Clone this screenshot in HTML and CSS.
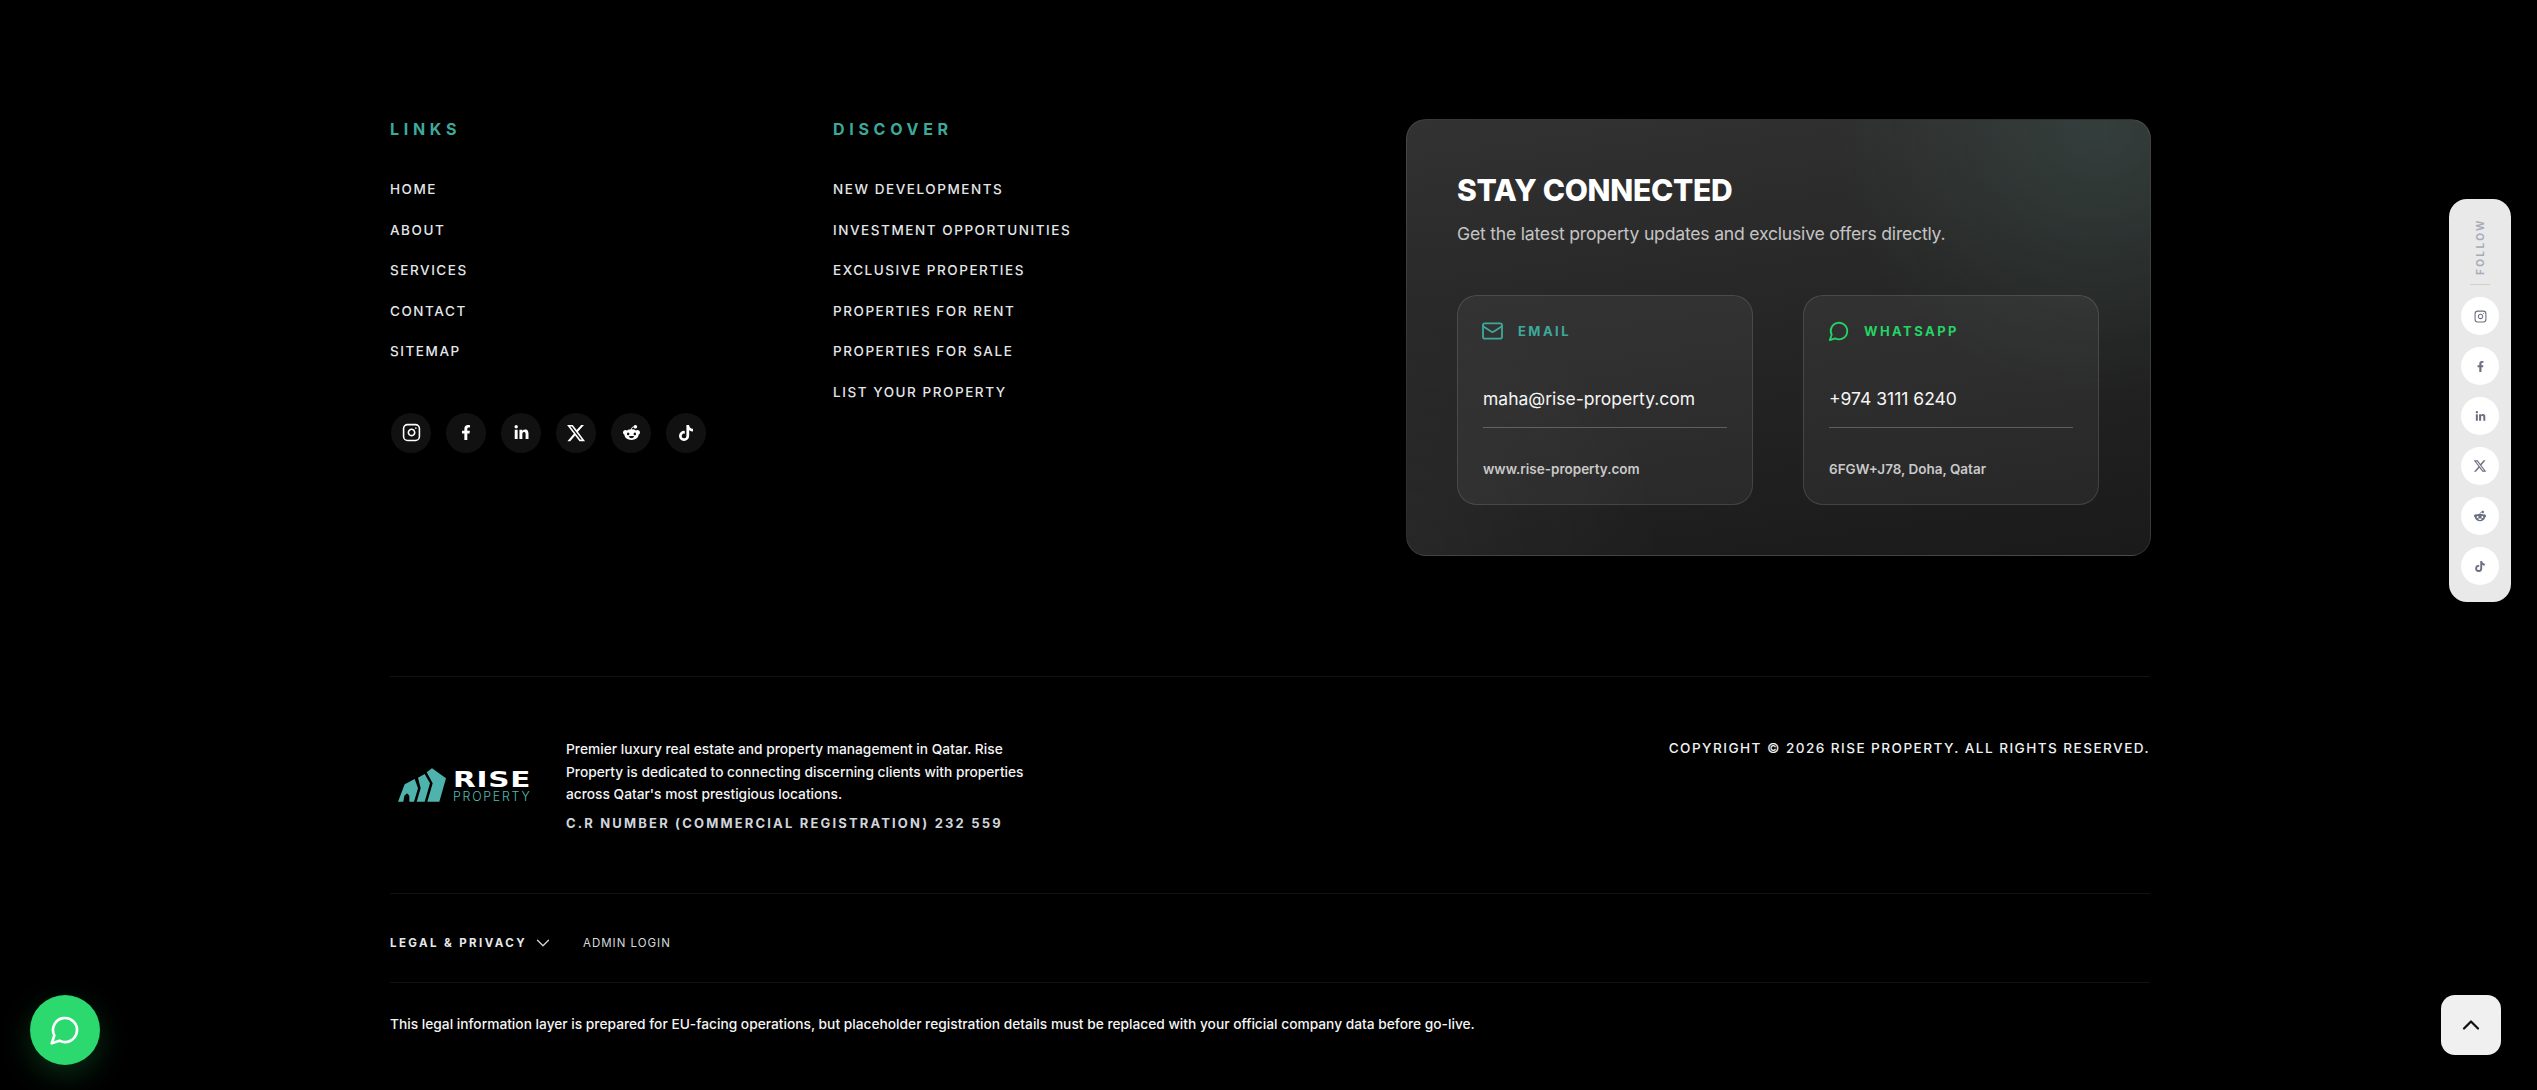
FILE: index.html
```html
<!DOCTYPE html>
<html lang="en">
<head>
<meta charset="utf-8">
<title>Rise Property</title>
<link rel="stylesheet" href="styles.css">
</head>
<body>
<svg class="defs" width="0" height="0" aria-hidden="true">
  <symbol id="i-instagram" viewBox="0 0 24 24"><g fill="none" stroke="currentColor" stroke-width="2" stroke-linecap="round" stroke-linejoin="round"><rect x="2" y="2" width="20" height="20" rx="5"/><path d="M16 11.37A4 4 0 1 1 12.63 8 4 4 0 0 1 16 11.37z"/><path d="M17.5 6.5h.01"/></g></symbol>
  <symbol id="i-facebook" viewBox="0 0 320 512"><path fill="currentColor" d="M279.14 288l14.22-92.66h-88.91v-60.13c0-25.35 12.42-50.06 52.24-50.06h40.42V6.26S260.43 0 225.36 0c-73.22 0-121.08 44.38-121.08 124.72v70.62H22.89V288h81.39v224h100.17V288z"/></symbol>
  <symbol id="i-linkedin" viewBox="0 0 448 512"><path fill="currentColor" d="M100.28 448H7.4V148.9h92.88zM53.79 108.1C24.09 108.1 0 83.5 0 53.8a53.79 53.79 0 0 1 107.58 0c0 29.7-24.1 54.3-53.79 54.3zM447.9 448h-92.68V302.4c0-34.7-.7-79.2-48.29-79.2-48.29 0-55.69 37.7-55.69 76.7V448h-92.78V148.9h89.08v40.8h1.3c12.4-23.5 42.69-48.3 87.88-48.3 94 0 111.28 61.9 111.28 142.3V448z"/></symbol>
  <symbol id="i-x" viewBox="0 0 512 512"><path fill="currentColor" d="M389.2 48h70.6L305.6 224.2 487 464H345L233.7 318.6 106.5 464H35.8L200.7 275.5 26.8 48H172.4L272.9 180.9 389.2 48zM364.4 421.8h39.1L151.1 88h-42L364.4 421.8z"/></symbol>
  <symbol id="i-reddit" viewBox="0 0 512 512"><path fill="currentColor" d="M373 138.6c-25.2 0-46.3-17.5-51.9-41l0 0c-30.6 4.3-54.2 30.7-54.2 62.4l0 .2c47.4 1.8 90.6 15.1 124.9 36.3c12.6-9.7 28.4-15.5 45.5-15.5c41.3 0 74.7 33.4 74.7 74.7c0 29.8-17.4 55.5-42.7 67.5c-2.4 86.8-97 156.6-213.2 156.6S45.5 410.1 43 323.4C17.6 311.5 0 285.7 0 255.7c0-41.3 33.4-74.7 74.7-74.7c17.2 0 33 5.8 45.7 15.6c34-21.1 76.8-34.4 123.7-36.4l0-.3c0-44.3 33.7-80.9 76.8-85.5C326.3 50.9 347.5 32 373 32c29.4 0 53.3 23.9 53.3 53.3s-23.9 53.3-53.3 53.3zM157.5 255.3c-20.9 0-38.9 20.8-40.2 47.9s17.1 38.1 38 38.1s36.6-9.8 37.8-36.9s-14.7-49.1-35.7-49.1zM395 304.2c-1.3-27.1-19.3-47.9-40.2-47.9s-36.9 22-35.7 49.1c1.3 27.1 16.9 36.9 37.8 36.9s39.3-11 38-38.1zm-60.1 70.8c1.5-3.6-1-7.7-4.9-8.1c-23-2.3-47.9-3.6-73.8-3.6s-50.8 1.3-73.8 3.6c-3.9 .4-6.4 4.5-4.9 8.1c12.9 30.8 43.3 52.4 78.7 52.4s65.8-21.6 78.7-52.4z"/></symbol>
  <symbol id="i-tiktok" viewBox="0 0 448 512"><path fill="currentColor" d="M448 209.91a210.06 210.06 0 0 1-122.77-39.25V349.38A162.55 162.55 0 1 1 185 188.31V278.2a74.62 74.62 0 1 0 52.23 71.18V0l88 0a121.18 121.18 0 0 0 1.86 22.17h0A122.18 122.18 0 0 0 381 102.39a121.43 121.43 0 0 0 67 20.14Z"/></symbol>
  <symbol id="i-chat" viewBox="0 0 24 24"><path fill="none" stroke="currentColor" stroke-width="2" stroke-linecap="round" stroke-linejoin="round" d="M7.9 20A9 9 0 1 0 4 16.1L2 22Z"/></symbol>
</svg>

<footer class="footer">
  <section class="top">
    <nav class="col">
      <h4 class="col-title">LINKS</h4>
      <ul class="col-list">
        <li><a href="#">HOME</a></li>
        <li><a href="#">ABOUT</a></li>
        <li><a href="#">SERVICES</a></li>
        <li><a href="#">CONTACT</a></li>
        <li><a href="#">SITEMAP</a></li>
      </ul>
      <div class="socials">
        <a class="social" href="#"><svg class="ig"><use href="#i-instagram"/></svg></a>
        <a class="social" href="#"><svg class="fb"><use href="#i-facebook"/></svg></a>
        <a class="social" href="#"><svg class="li"><use href="#i-linkedin"/></svg></a>
        <a class="social" href="#"><svg class="tw"><use href="#i-x"/></svg></a>
        <a class="social" href="#"><svg class="rd"><use href="#i-reddit"/></svg></a>
        <a class="social" href="#"><svg class="tt"><use href="#i-tiktok"/></svg></a>
      </div>
    </nav>
    <nav class="col">
      <h4 class="col-title">DISCOVER</h4>
      <ul class="col-list">
        <li><a href="#">NEW DEVELOPMENTS</a></li>
        <li><a href="#">INVESTMENT OPPORTUNITIES</a></li>
        <li><a href="#">EXCLUSIVE PROPERTIES</a></li>
        <li><a href="#">PROPERTIES FOR RENT</a></li>
        <li><a href="#">PROPERTIES FOR SALE</a></li>
        <li><a href="#">LIST YOUR PROPERTY</a></li>
      </ul>
    </nav>
    <aside class="connect">
      <h2 class="connect-title">STAY CONNECTED</h2>
      <p class="connect-sub">Get the latest property updates and exclusive offers directly.</p>
      <div class="contact-grid">
        <div class="contact">
          <div class="contact-head teal">
            <svg class="mail" viewBox="2 4 20 16" fill="none" stroke="currentColor" stroke-width="1.9" stroke-linecap="round" stroke-linejoin="round"><rect x="2" y="4" width="20" height="16" rx="2"/><path d="m22 7-8.97 5.7a1.94 1.94 0 0 1-2.06 0L2 7"/></svg>
            <span>EMAIL</span>
          </div>
          <div class="contact-value">maha@rise-property.com</div>
          <div class="contact-note">www.rise-property.com</div>
        </div>
        <div class="contact">
          <div class="contact-head green">
            <svg class="bubble"><use href="#i-chat"/></svg>
            <span>WHATSAPP</span>
          </div>
          <div class="contact-value">+974 3111 6240</div>
          <div class="contact-note">6FGW+J78, Doha, Qatar</div>
        </div>
      </div>
    </aside>
  </section>

  <section class="brand-row">
    <div class="brand">
      <div class="logo">
        <svg class="logo-mark" viewBox="28 40 144 100">
          <path fill="#4fb3ad" d="M28 140 48 88 78 72 88 100 76 140H62V122L55 115 47 122 44 140Z"/>
          <path fill="#4fb3ad" d="M88 68 108 57 124 85 108 140H84L96 100Z"/>
          <path fill="#4fb3ad" d="M114 52 130 40 172 70 152 140H116L132 85Z"/>
        </svg>
        <div class="logo-text">
          <span class="logo-rise">RISE</span>
          <span class="logo-property">PROPERTY</span>
        </div>
      </div>
      <div class="brand-copy">
        <p class="brand-desc">Premier luxury real estate and property management in Qatar. Rise Property is dedicated to connecting discerning clients with properties across Qatar's most prestigious locations.</p>
        <p class="brand-cr">C.R NUMBER (COMMERCIAL REGISTRATION) 232 559</p>
      </div>
    </div>
    <p class="copyright">COPYRIGHT © 2026 RISE PROPERTY. ALL RIGHTS RESERVED.</p>
  </section>

  <section class="legal-row">
    <button class="legal-btn">LEGAL &amp; PRIVACY
      <svg class="chev" viewBox="0 0 24 24" fill="none" stroke="currentColor" stroke-linecap="round" stroke-linejoin="round"><path d="m6 9 6 6 6-6"/></svg>
    </button>
    <a class="admin" href="#">ADMIN LOGIN</a>
  </section>

  <section class="notice">
    <p>This legal information layer is prepared for EU-facing operations, but placeholder registration details must be replaced with your official company data before go-live.</p>
  </section>
</footer>

<aside class="follow">
  <span class="follow-label">FOLLOW</span>
  <span class="follow-rule"></span>
  <a class="follow-btn" href="#"><svg class="ig2"><use href="#i-instagram"/></svg></a>
  <a class="follow-btn" href="#"><svg class="fb2"><use href="#i-facebook"/></svg></a>
  <a class="follow-btn" href="#"><svg class="li2"><use href="#i-linkedin"/></svg></a>
  <a class="follow-btn" href="#"><svg class="tw2"><use href="#i-x"/></svg></a>
  <a class="follow-btn" href="#"><svg class="rd2"><use href="#i-reddit"/></svg></a>
  <a class="follow-btn" href="#"><svg class="tt2"><use href="#i-tiktok"/></svg></a>
</aside>

<a class="fab" href="#"><svg class="fab-icon"><use href="#i-chat"/></svg></a>
<a class="to-top" href="#"><svg class="to-top-icon" viewBox="0 0 24 24" fill="none" stroke="currentColor" stroke-width="1.9" stroke-linecap="round" stroke-linejoin="round"><path d="m18 15-6-6-6 6"/></svg></a>
</body>
</html>
```
FILE: styles.css
```css
* { box-sizing: border-box; }
html, body { margin: 0; padding: 0; background: #000; }
body { height: 1090px; overflow: hidden; font-family: "Inter", "Liberation Sans", sans-serif; color: #fff; }
h2, h4, p, ul { margin: 0; padding: 0; }
ul { list-style: none; }
a { color: inherit; text-decoration: none; }
.defs { position: absolute; }

.footer { padding: 119px 387px 0 390px; }

.top { display: grid; grid-template-columns: 443px 573px 745px; height: 558px; border-bottom: 1px solid #121212; align-items: start; }
.col-title { padding-top: 1px; font-size: 16px; font-weight: 700; letter-spacing: 4.7px; line-height: 18px; color: #3da99b; }
.col-list { margin-top: 31px; display: flex; flex-direction: column; }
.col-list li { height: 40.5px; display: flex; align-items: center; font-size: 13.5px; font-weight: 500; letter-spacing: 1.55px; color: #e4e7ea; }
.socials { margin: 41px 0 0 1px; display: flex; gap: 15px; }
.social { width: 40px; height: 40px; border-radius: 50%; background: #111; display: flex; align-items: center; justify-content: center; color: #fff; }
.ig { width: 19px; height: 19px; }
.fb { width: 10px; height: 15px; }
.li { width: 15px; height: 16px; }
.tw { width: 20px; height: 20px; }
.rd { width: 17px; height: 17px; }
.tt { width: 14px; height: 16px; }

.connect { height: 437px; padding: 50px 50px 0; border-radius: 20px; border: 1px solid rgba(255,255,255,.09);
  background:
    radial-gradient(circle at 93% 3%, rgba(70,110,100,.26), rgba(70,110,100,0) 32%),
    radial-gradient(circle at 0% 100%, rgba(255,255,255,.04), rgba(255,255,255,0) 30%),
    linear-gradient(172deg, #323232 0%, #252525 50%, #1a1a1a 100%); }
.connect-title { font-size: 30px; font-weight: 800; letter-spacing: -.3px; line-height: 36px; color: #fff; margin-top: 2px; }
.connect-sub { margin-top: 13px; font-size: 17.6px; font-weight: 400; letter-spacing: -.21px; line-height: 26px; color: #c4c4c4; }
.contact-grid { margin-top: 48px; display: grid; grid-template-columns: 296px 296px; gap: 50px; }
.contact { height: 210px; padding: 24px 25px 0; border-radius: 20px; border: 1px solid rgba(255,255,255,.12); background: rgba(255,255,255,.05); }
.contact-head { display: flex; align-items: center; height: 22px; font-size: 13px; font-weight: 700; letter-spacing: 2.45px; }
.contact-head.teal { color: #3da99b; gap: 16px; }
.contact-head.green { color: #25d366; gap: 14px; }
.mail { width: 19px; height: 16px; overflow: visible; }
.bubble { width: 22px; height: 22px; margin-left: -1px; }
.contact-value { margin-top: 37px; height: 49px; padding-top: 8px; font-size: 17.5px; font-weight: 400; line-height: 24px; color: #f5f5f5; border-bottom: 1px solid rgba(255,255,255,.24); }
.contact-note { margin-top: 31px; font-size: 13.5px; font-weight: 600; line-height: 20px; color: #c9c9c9; }

.brand-row { display: flex; justify-content: space-between; align-items: flex-start; height: 217px; padding-top: 60px; border-bottom: 1px solid #121212; }
.brand { display: flex; align-items: flex-start; }
.logo { width: 176px; padding: 31px 0 0 8px; display: flex; align-items: flex-start; gap: 7px; }
.logo-mark { width: 48px; height: 34px; flex: none; }
.logo-text { display: flex; flex-direction: column; padding-top: 3px; }
.logo-rise { font-family: "DejaVu Sans", sans-serif; font-size: 22px; font-weight: 700; line-height: 18px; height: 18px; letter-spacing: .6px; color: #fff; transform: scaleX(1.34); transform-origin: left center; }
.logo-property { margin-top: 2px; font-size: 12.4px; font-weight: 300; line-height: 12px; height: 12px; letter-spacing: 1.75px; color: #54bab3; }
.brand-copy { width: 470px; }
.brand-desc { padding-top: 1px; font-size: 13.75px; font-weight: 500; line-height: 22.7px; color: #f2f4f6; }
.brand-cr { margin-top: 6px; font-size: 13px; font-weight: 700; letter-spacing: 2.17px; line-height: 22px; color: #cfd5dc; }
.copyright { font-size: 13.6px; font-weight: 500; letter-spacing: 1.44px; line-height: 22px; color: #eef1f4; }

.legal-row { display: flex; align-items: center; height: 89px; padding-top: 9px; border-bottom: 1px solid #121212; }
.legal-btn { display: flex; align-items: center; padding: 0; margin: 0; background: none; border: 0; font-family: inherit; font-size: 11.5px; font-weight: 700; letter-spacing: 2.4px; color: #e6e8ea; }
.chev { width: 22px; height: 22px; margin-left: 5px; color: #d5d5d5; stroke-width: 1.4; }
.admin { margin-left: 29px; font-size: 11.5px; font-weight: 400; letter-spacing: 1px; color: #d6dade; }

.notice { padding-top: 31px; }
.notice p { font-size: 13.75px; font-weight: 500; line-height: 20px; color: #f4f4f4; }

.follow { position: fixed; left: 2449px; top: 199px; width: 62px; height: 403px; border-radius: 18px; background: #e9e9e9; display: flex; flex-direction: column; align-items: center; padding-top: 18px; }
.follow-label { writing-mode: vertical-rl; transform: rotate(180deg); height: 58px; font-size: 10px; font-weight: 700; letter-spacing: 2.4px; color: #a5abb8; line-height: 12px; }
.follow-rule { width: 20px; height: 1px; margin-top: 9px; background: #cfcfcf; }
.follow-btn { width: 38px; height: 38px; margin-top: 12px; border-radius: 50%; background: #fff; display: flex; align-items: center; justify-content: center; color: #6b7080; }
.ig2 { width: 13px; height: 13px; }
.fb2 { width: 7px; height: 11px; }
.li2 { width: 11px; height: 11px; }
.tw2 { width: 14px; height: 14px; }
.rd2 { width: 12px; height: 12px; }
.tt2 { width: 10px; height: 11px; }

.fab { position: fixed; left: 30px; top: 995px; width: 70px; height: 70px; border-radius: 50%; background: #2bd96f; display: flex; align-items: center; justify-content: center; color: #fff; box-shadow: 0 10px 30px rgba(37,211,102,.22); }
.fab-icon { width: 32px; height: 32px; }
.to-top { position: fixed; left: 2441px; top: 995px; width: 60px; height: 60px; border-radius: 14px; background: #f0f0f0; display: flex; align-items: center; justify-content: center; color: #111; }
.to-top-icon { width: 28px; height: 28px; }
```
